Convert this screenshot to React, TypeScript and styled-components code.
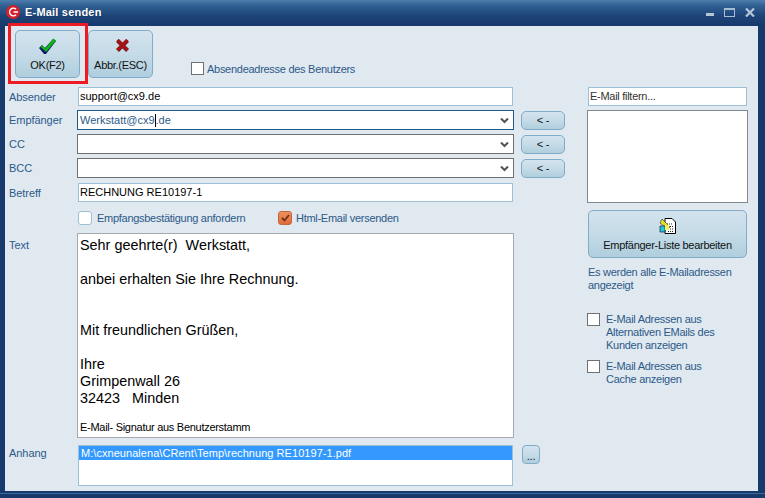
import React from "react";
import styled, { createGlobalStyle } from "styled-components";

const GlobalStyle = createGlobalStyle`
  html, body { margin: 0; padding: 0; background: #17396b; }
  body { font-family: "Liberation Sans", Arial, sans-serif; font-size: 11px; letter-spacing: -0.28px; color: #2c5a88; }
`;

const MESSAGE = `Sehr geehrte(r)  Werkstatt,

anbei erhalten Sie Ihre Rechnung.


Mit freundlichen Grüßen,

Ihre
Grimpenwall 26
32423   Minden`;

const CheckIcon = () => (
  <svg width="17" height="16" viewBox="0 0 17 16">
    <path d="M0 10l3-3 3 3L14 1l3 2-10 13h-2z" fill="#0b1a6e" />
    <path d="M1.500 9l1.800-1.800 3.200 3.300L14.200.5 17 2.400 7.200 14z" fill="#10b310" />
  </svg>
);

const CrossIcon = () => (
  <svg width="15" height="15" viewBox="0 0 15 15">
    <path d="M2.500 2.500l10 10M12.500 2.500l-10 10" fill="none" stroke="#6e1a1a" strokeWidth="4" />
    <path d="M2.500 2l10 10M12.500 2l-10 10" fill="none" stroke="#a81216" strokeWidth="3" />
  </svg>
);

const Chevron = () => (
  <svg width="9" height="7" viewBox="0 0 9 7">
    <path d="M1 1.500l3.500 3.500L8 1.500" fill="none" stroke="#555" strokeWidth="2" />
  </svg>
);

const ListEditIcon = () => (
  <svg width="17" height="16" viewBox="0 0 17 16">
    <path d="M6 .5h7l3.500 3.500v11.500H6z" fill="#fff" stroke="#000" />
    <path d="M8 6h6M9 8.500h6M9 11h5M9 13.500h6" stroke="#222" strokeDasharray="1 1" />
    <path d="M3 1l8 8-2 2-8-6z" fill="#e8e020" stroke="#444" strokeWidth=".7" />
    <path d="M1 8h5v6H1z" fill="#20c8d8" stroke="#124" strokeWidth=".7" />
    <path d="M6 7h4v5H6z" fill="#f4f060" />
  </svg>
);

const AppLogo = () => (
  <svg width="14" height="14" viewBox="0 0 14 14">
    <circle cx="7" cy="7" r="7" fill="#d4202a" />
    <path d="M10 4.200A3.800 3.800 0 1 0 10 9.800" fill="none" stroke="#fff" strokeWidth="1.500" />
    <path d="M7.500 7H12" stroke="#fff" strokeWidth="1.500" />
  </svg>
);

const MinimizeIcon = () => (
  <svg width="8" height="3" viewBox="0 0 8 3">
    <rect width="8" height="3" fill="#b4c6d8" />
  </svg>
);

const MaximizeIcon = () => (
  <svg width="11" height="9" viewBox="0 0 11 9">
    <rect x=".5" y="1" width="10" height="7.500" fill="none" stroke="#a8bdd2" />
    <path d="M0 1h11" stroke="#a8bdd2" strokeWidth="2" />
  </svg>
);

const CloseIcon = () => (
  <svg width="10" height="9" viewBox="0 0 10 9">
    <path d="M1 .5l8 8M9 .5l-8 8" stroke="#b4c6d8" strokeWidth="2.200" />
  </svg>
);

const App: React.FC = () => (
  <Window>
    <GlobalStyle />
    <TitleBar>
      <AppLogo />
      <TitleText>E-Mail senden</TitleText>
      <WindowControls>
        <MinimizeIcon />
        <MaximizeIcon />
        <CloseIcon />
      </WindowControls>
    </TitleBar>
    <Body>
      <MainColumn>
        <Toolbar>
          <ToolButton>
            <Highlight />
            <CheckIcon />
            OK(F2)
          </ToolButton>
          <ToolButton>
            <CrossSlot>
              <CrossIcon />
            </CrossSlot>
            Abbr.(ESC)
          </ToolButton>
          <SenderCheck>
            <Box />
            Absendeadresse des Benutzers
          </SenderCheck>
        </Toolbar>

        <Row>
          <Label>Absender</Label>
          <TextField>support@cx9.de</TextField>
        </Row>
        <Row $mt={4}>
          <Label>Empfänger</Label>
          <Combo $focused>
            <ComboText>
              Werkstatt@cx9
              <Caret />
              .de
            </ComboText>
            <Chevron />
          </Combo>
          <ArrowButton>{"< -"}</ArrowButton>
        </Row>
        <Row $mt={4}>
          <Label>CC</Label>
          <Combo>
            <ComboText />
            <Chevron />
          </Combo>
          <ArrowButton>{"< -"}</ArrowButton>
        </Row>
        <Row $mt={4}>
          <Label>BCC</Label>
          <Combo>
            <ComboText />
            <Chevron />
          </Combo>
          <ArrowButton>{"< -"}</ArrowButton>
        </Row>
        <Row $mt={5}>
          <Label>Betreff</Label>
          <TextField>RECHNUNG RE10197-1</TextField>
        </Row>

        <OptionRow>
          <Option $width={152} $gap={5}>
            <SoftBox />
            Empfangsbestätigung anfordern
          </Option>
          <Option $gap={4}>
            <CheckedBox>
              <svg width="9" height="8" viewBox="0 0 9 8">
                <path d="M1 4l2.500 2.500L8 1" fill="none" stroke="#6b3418" strokeWidth="1.800" />
              </svg>
            </CheckedBox>
            Html-Email versenden
          </Option>
        </OptionRow>

        <TextRow>
          <TextLabel $pt={6}>Text</TextLabel>
          <MessageBox>
            <MessageBody>{MESSAGE}</MessageBody>
            <Signature>E-Mail- Signatur aus Benutzerstamm</Signature>
          </MessageBox>
        </TextRow>

        <AttachmentRow>
          <TextLabel $pt={2}>Anhang</TextLabel>
          <AttachmentList>
            <AttachmentItem>M:\cxneunalena\CRent\Temp\rechnung RE10197-1.pdf</AttachmentItem>
          </AttachmentList>
          <BrowseButton>...</BrowseButton>
        </AttachmentRow>
      </MainColumn>

      <SideColumn>
        <FilterField>E-Mail filtern...</FilterField>
        <RecipientList />
        <EditButton>
          <ListEditIcon />
          Empfänger-Liste bearbeiten
        </EditButton>
        <Hint>Es werden alle E-Mailadressen angezeigt</Hint>
        <SideOption $mt={21}>
          <Box />
          <span>
            E-Mail Adressen aus
            <br />
            Alternativen EMails des
            <br />
            Kunden anzeigen
          </span>
        </SideOption>
        <SideOption $mt={8}>
          <Box />
          <span>
            E-Mail Adressen aus
            <br />
            Cache anzeigen
          </span>
        </SideOption>
      </SideColumn>
    </Body>
    <BottomEdge />
  </Window>
);

export default App;

const Window = styled.div`
  width: 765px;
  height: 498px;
  display: flex;
  flex-direction: column;
  overflow: hidden;
  background: #17396b;
`;

const TitleBar = styled.div`
  height: 26px;
  flex: none;
  display: flex;
  align-items: center;
  gap: 5px;
  padding: 0 10px 2px 6px;
  box-sizing: border-box;
  background: linear-gradient(#4c7dab 0, #2f5f92 6px, #1d4478 16px, #17396b 100%);
`;

const TitleText = styled.div`
  font-weight: bold;
  font-size: 11px;
  letter-spacing: 0.2px;
  color: #fff;
  text-shadow: 1px 1px 0 #1a3a66;
`;

const WindowControls = styled.div`
  margin-left: auto;
  display: flex;
  align-items: center;
  gap: 10px;
  svg:first-child {
    align-self: flex-end;
    margin-bottom: 1px;
  }
`;

const Body = styled.div`
  width: 753px;
  height: 465px;
  margin-left: 5px;
  flex: none;
  display: flex;
  background: #e0e8f0;
`;

const BottomEdge = styled.div`
  height: 1px;
  margin-top: 2px;
  flex: none;
  background: #3a6a9a;
`;

const MainColumn = styled.div`
  width: 582px;
  flex: none;
  padding-left: 4px;
  box-sizing: border-box;
`;

const Toolbar = styled.div`
  height: 61px;
  padding: 4px 0 0 6px;
  box-sizing: border-box;
  display: flex;
  gap: 8px;
`;

const ToolButton = styled.div`
  position: relative;
  width: 65px;
  height: 48px;
  box-sizing: border-box;
  padding: 7px 0 6px;
  display: flex;
  flex-direction: column;
  align-items: center;
  justify-content: space-between;
  border: 1px solid #82abc8;
  border-radius: 5px;
  background: linear-gradient(#d3e3ee, #c3dae6 55%, #afcede);
  color: #111;
  font-size: 11px;
`;

const CrossSlot = styled.div`
  height: 15px;
  margin-left: 3px;
`;

const Highlight = styled.div`
  position: absolute;
  left: -8px;
  top: -8px;
  width: 80px;
  height: 61px;
  box-sizing: border-box;
  border: 3px solid #ed1c24;
`;

const SenderCheck = styled.div`
  margin: 32px 0 0 30px;
  height: 13px;
  display: flex;
  align-items: center;
  gap: 3px;
`;

const Box = styled.div`
  width: 13px;
  height: 13px;
  flex: none;
  box-sizing: border-box;
  border: 1px solid #707070;
  background: #fff;
`;

const SoftBox = styled(Box)`
  width: 14px;
  height: 14px;
  border-color: #9cc0d8;
  border-radius: 3px;
`;

const CheckedBox = styled(SoftBox)`
  display: flex;
  align-items: center;
  justify-content: center;
  border-color: #c0663a;
  background: linear-gradient(#f09060, #e06a38);
`;

const Row = styled.div<{ $mt?: number }>`
  display: flex;
  align-items: center;
  margin-top: ${(p) => p.$mt ?? 0}px;
`;

const Label = styled.div`
  width: 68px;
  flex: none;
  font-size: 11px;
  letter-spacing: -0.05px;
`;

const TextField = styled.div`
  width: 435px;
  height: 19px;
  margin-left: 1px;
  flex: none;
  box-sizing: border-box;
  padding-left: 1px;
  line-height: 17px;
  letter-spacing: 0;
  color: #000;
  background: #fff;
  border: 1px solid #9cc0d8;
`;

const Combo = styled.div<{ $focused?: boolean }>`
  width: 437px;
  height: 20px;
  flex: none;
  box-sizing: border-box;
  padding: 0 4px 0 2px;
  display: flex;
  align-items: center;
  justify-content: space-between;
  background: #fff;
  border: 1px solid ${(p) => (p.$focused ? "#1f5c8c" : "#707070")};
`;

const ComboText = styled.div`
  display: flex;
  align-items: center;
  letter-spacing: 0;
  color: #2c5a88;
`;

const Caret = styled.span`
  width: 1px;
  height: 13px;
  background: #000;
`;

const ArrowButton = styled.div`
  width: 44px;
  height: 19px;
  margin-left: 7px;
  box-sizing: border-box;
  display: flex;
  align-items: center;
  justify-content: center;
  color: #111;
  border: 1px solid #82abc8;
  border-radius: 5px;
  background: linear-gradient(#d3e3ee, #c3dae6 55%, #afcede);
`;

const OptionRow = styled.div`
  height: 14px;
  margin: 9px 0 0 69px;
  display: flex;
  gap: 48px;
`;

const Option = styled.div<{ $width?: number; $gap: number }>`
  display: flex;
  align-items: center;
  gap: ${(p) => p.$gap}px;
  white-space: nowrap;
  width: ${(p) => (p.$width ? `${p.$width}px` : "auto")};
`;

const TextRow = styled.div`
  margin-top: 8px;
  display: flex;
`;

const TextLabel = styled.div<{ $pt: number }>`
  width: 68px;
  flex: none;
  padding-top: ${(p) => p.$pt}px;
  letter-spacing: -0.05px;
`;

const MessageBox = styled.div`
  width: 437px;
  height: 205px;
  box-sizing: border-box;
  padding: 3px 2px 0;
  background: #fff;
  border: 1px solid #a8a8b0;
  color: #000;
`;

const MessageBody = styled.div`
  white-space: pre-wrap;
  font-size: 14.4px;
  letter-spacing: 0;
  line-height: 17px;
`;

const Signature = styled.div`
  margin-top: 14px;
  font-size: 11px;
  line-height: 13px;
`;

const AttachmentRow = styled.div`
  margin-top: 7px;
  display: flex;
`;

const AttachmentList = styled.div`
  width: 435px;
  height: 41px;
  margin-left: 1px;
  flex: none;
  box-sizing: border-box;
  background: #fff;
  border: 1px solid #9cc0d8;
`;

const AttachmentItem = styled.div`
  height: 14px;
  padding-left: 2px;
  line-height: 14px;
  letter-spacing: 0.05px;
  color: #fff;
  background: #3399ff;
`;

const BrowseButton = styled.div`
  width: 18px;
  height: 19px;
  margin-left: 9px;
  box-sizing: border-box;
  text-align: center;
  line-height: 20px;
  color: #111;
  border: 1px solid #82abc8;
  border-radius: 4px;
  background: linear-gradient(#d3e3ee, #c3dae6 55%, #afcede);
`;

const SideColumn = styled.div`
  width: 161px;
  padding-top: 61px;
  flex: none;
`;

const FilterField = styled.div`
  width: 159px;
  height: 19px;
  margin-left: 1px;
  box-sizing: border-box;
  padding-left: 1px;
  line-height: 17px;
  color: #333;
  background: #fff;
  border: 1px solid #9cc0d8;
`;

const RecipientList = styled.div`
  height: 93px;
  margin-top: 4px;
  box-sizing: border-box;
  background: #fff;
  border: 1px solid #808890;
`;

const EditButton = styled.div`
  width: 159px;
  height: 48px;
  margin: 7px 0 0 1px;
  box-sizing: border-box;
  padding: 7px 0 6px;
  display: flex;
  flex-direction: column;
  align-items: center;
  justify-content: space-between;
  color: #111;
  border: 1px solid #82abc8;
  border-radius: 5px;
  background: linear-gradient(#d3e3ee, #c3dae6 55%, #afcede);
`;

const Hint = styled.div`
  margin: 8px 0 0 1px;
  line-height: 13px;
  width: 160px;
`;

const SideOption = styled.div<{ $mt: number }>`
  display: flex;
  gap: 6px;
  line-height: 13px;
  margin-top: ${(p) => p.$mt}px;
`;
